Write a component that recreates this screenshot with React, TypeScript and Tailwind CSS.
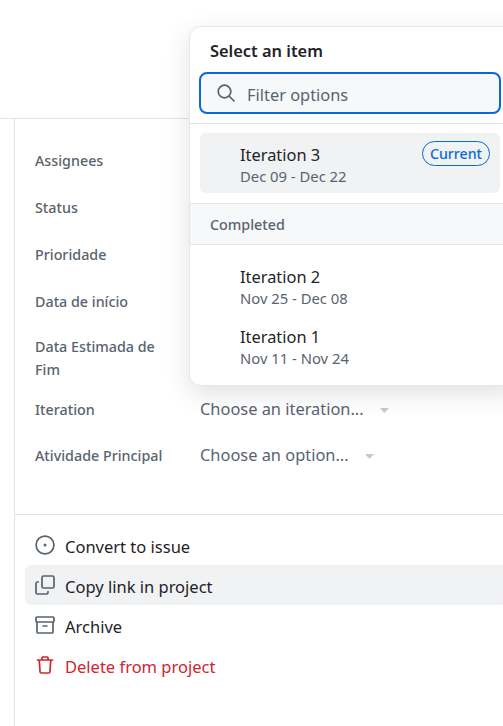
import React from "react";

function Row({ label, value, tall }: { label: string; value?: string; tall?: boolean }) {
  return (
    <div className={`flex items-center ${tall ? "h-[46px]" : "h-[47px]"}`}>
      <div className="w-[165px] shrink-0 text-[14.3px] leading-[23px] font-medium text-[#59636e]">{label}</div>
      {value && (
        <div className="flex items-center text-[#59636e] text-[16.4px]">
          <span>{value}</span>
          <svg className="ml-[16px] mt-[3px] text-[#c5cad0]" width="9" height="5" viewBox="0 0 9 5"><path d="M0 0h9L4.5 5z" fill="currentColor" /></svg>
        </div>
      )}
    </div>
  );
}

function Action({ icon, label, active, danger }: { icon: React.ReactNode; label: string; active?: boolean; danger?: boolean }) {
  return (
    <div className={`h-10 flex items-center gap-[10px] pl-[10px] rounded-l-[6px] text-[16.5px] ${active ? "bg-[#f1f2f4]" : ""} ${danger ? "text-[#d1242f]" : "text-[#1f2328]"}`}>
      <span className={`w-5 h-5 flex items-center justify-center ${danger ? "text-[#d1242f]" : "text-[#59636e]"}`}>{icon}</span>
      <span className="pt-[4px]">{label}</span>
    </div>
  );
}

function Option({ name, date, active, current }: { name: string; date: string; active?: boolean; current?: boolean }) {
  return (
    <div className={`h-[60px] pl-10 pr-[10px] flex items-center justify-between rounded-[6px] ${active ? "bg-[#f1f2f4]" : ""}`}>
      <div className="pt-[4px]">
        <div className="text-[#1f2328] text-[16.4px] leading-[22px]">{name}</div>
        <div className="text-[#59636e] text-[14.8px] leading-[21px]">{date}</div>
      </div>
      {current && (
        <div className="self-start mt-[8px] h-[25px] w-[68px] flex items-center justify-center rounded-full border border-[#0969da] text-[#0969da] text-[14.2px] font-medium">Current</div>
      )}
    </div>
  );
}

export default function App() {
  return (
    <div className="relative w-[503px] h-[726px] overflow-hidden bg-white" style={{ fontFamily: '"Noto Sans", "Open Sans", sans-serif' }}>
      <div className="h-[119px] border-b border-[#dde3e9]" />
      <div className="ml-[14px] h-[607px] border-l border-[#dde3e9] flex flex-col">
        <div className="pl-5 pt-[18px]">
          <Row label="Assignees" />
          <Row label="Status" />
          <Row label="Prioridade" />
          <Row label="Data de início" tall />
          <div className="w-[140px] h-[46px] mt-[11px] text-[14.3px] leading-[23px] font-medium text-[#59636e]">Data Estimada de Fim</div>
          <div className="mt-[5px]">
            <Row label="Iteration" value="Choose an iteration..." tall />
            <Row label="Atividade Principal" value="Choose an option..." />
          </div>
        </div>
        <div className="mt-[35px] border-t border-[#dde3e9] pt-[10px] pl-[10px]">
          <Action
            label="Convert to issue"
            icon={
              <svg width="20" height="20" viewBox="0 0 20 20" fill="none" stroke="currentColor" strokeWidth="1.7"><circle cx="10" cy="10" r="8.9" /><circle cx="10" cy="10" r="1.5" fill="currentColor" stroke="none" /></svg>
            }
          />
          <Action
            active
            label="Copy link in project"
            icon={
              <svg width="20" height="20" viewBox="0 0 20 20" fill="none" stroke="currentColor" strokeWidth="1.7" strokeLinejoin="round"><rect x="7" y="1" width="12" height="12" rx="1.5" /><path d="M4 7H2.5A1.5 1.5 0 0 0 1 8.5v9A1.5 1.5 0 0 0 2.5 19h9a1.5 1.5 0 0 0 1.5-1.5V16" /></svg>
            }
          />
          <Action
            label="Archive"
            icon={
              <svg width="20" height="20" viewBox="0 0 20 20" fill="none" stroke="currentColor" strokeWidth="1.7" strokeLinejoin="round"><rect x="1" y="2" width="18" height="5" rx="1" /><path d="M2 7v10a1 1 0 0 0 1 1h14a1 1 0 0 0 1-1V7M7.5 11h5" /></svg>
            }
          />
          <Action
            danger
            label="Delete from project"
            icon={
              <svg width="20" height="20" viewBox="0 0 20 20" fill="none" stroke="currentColor" strokeWidth="1.7" strokeLinejoin="round" strokeLinecap="round"><path d="M2.5 5h15M7 5V2.8A.8.8 0 0 1 7.8 2h4.4a.8.8 0 0 1 .8.8V5M4.2 5l.9 12.2a1 1 0 0 0 1 .8h7.8a1 1 0 0 0 1-.8L15.8 5" /></svg>
            }
          />
        </div>
      </div>

      <div className="absolute left-[189px] top-[26px] w-[330px] h-[360px] bg-white rounded-[12px] border border-[#e4e8ec] shadow-[0_8px_24px_rgba(66,74,83,0.16)]">
        <div className="pl-5 pt-[12px] h-[45px] text-[16.4px] leading-[24px] font-semibold text-[#1f2328]">Select an item</div>
        <div className="ml-[9px] w-[302px] h-[42px] flex items-center rounded-[8px] border-2 border-[#0969da] bg-[#f6f8fa] pl-[16px] text-[16.4px] text-[#59636e]">
          <svg className="mr-[12px]" width="18" height="18" viewBox="0 0 18 18" fill="none" stroke="currentColor" strokeWidth="1.7" strokeLinecap="round"><circle cx="7.5" cy="7.5" r="6.3" /><path d="M12 12l5 5" /></svg>
          <span className="pt-[5px]">Filter options</span>
        </div>
        <div className="mt-[9px] border-t border-[#dde3e9] pt-[9px] pl-[10px] pr-[18px]">
          <Option name="Iteration 3" date="Dec 09 - Dec 22" active current />
        </div>
        <div className="mt-[10px] h-[42px] pl-5 pt-[2px] flex items-center border-y border-[#e4e8ec] bg-[#f6f8fa] text-[14.3px] font-medium text-[#59636e]">Completed</div>
        <div className="pt-[10px] pl-[10px] pr-[18px]">
          <Option name="Iteration 2" date="Nov 25 - Dec 08" />
          <Option name="Iteration 1" date="Nov 11 - Nov 24" />
        </div>
      </div>
    </div>
  );
}
